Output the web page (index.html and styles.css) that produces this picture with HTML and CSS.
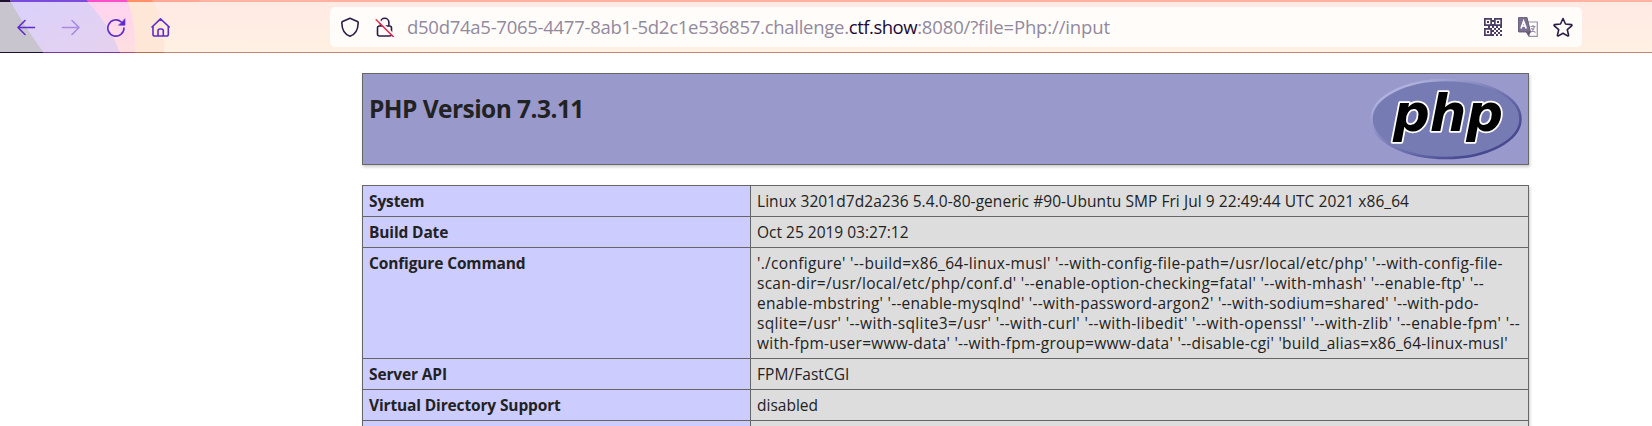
FILE: index.html
```html
<!DOCTYPE html>
<html lang="en">
<head>
<meta charset="utf-8">
<title>phpinfo()</title>
<link rel="stylesheet" href="styles.css">
</head>
<body>
<header class="toolbar">
  <svg class="theme" viewBox="0 0 200 53" width="200" height="53" aria-hidden="true">
    <defs>
      <linearGradient id="lilac" x1="0" y1="0" x2="1" y2="1"><stop offset="0" stop-color="#d9d1fb"/><stop offset="1" stop-color="#e6d1ee"/></linearGradient>
      <linearGradient id="pink" x1="0" y1="0" x2="0" y2="1"><stop offset="0" stop-color="#ffd2f0"/><stop offset="1" stop-color="#ffdfe0"/></linearGradient>
    </defs>
    <path d="M128 2H154Q166 28 164 52H120Z" fill="#ffe7d8"/>
    <path d="M88 2H128Q137 28 135 52H100Z" fill="url(#pink)"/>
    <path d="M10 2H88Q110 26 120 52H30Z" fill="url(#lilac)"/>
    <path d="M0 2H11Q18 16 43 52H0Z" fill="#c9c5cf"/>
    <path d="M0 0H10L11 2H0Z" fill="#1d1033"/>
    <path d="M10 0H87L89 2H11Z" fill="#7b4bdc"/>
    <path d="M87 0H127L128 2H89Z" fill="#f950c8"/>
    <path d="M127 0H152L154 2H128Z" fill="#ff9068"/>
    <path d="M152 0H200V2H154Z" fill="#ffa893"/>
    <path d="M0 52H43V53H0Z" fill="#1d1033"/>
    <path d="M43 52H120V53H43Z" fill="#75389e"/>
    <path d="M120 52H135V53H120Z" fill="#ad4d7c"/>
    <path d="M135 52H164V53H135Z" fill="#b8704f"/>
  </svg>
  <nav class="nav">
    <svg class="icon" viewBox="0 0 20 20"><path d="M18.500 10.500H2M9 3.500L2 10.500L9 17.500"/></svg>
    <svg class="icon faded" viewBox="0 0 20 20"><path d="M1.500 10.500H18M11 3.500L18 10.500L11 17.500"/></svg>
    <svg class="icon" viewBox="0 0 20 20"><path d="M18 11A8.100 8.100 0 1 1 15.300 5"/><path class="solid" d="M19 2V8.200H12.800Z"/></svg>
    <svg class="icon" viewBox="0 0 20 20"><path d="M1 10L9.500 1.800L18.200 10M2 9.500V17.200Q2 19 3.800 19H15.500Q17.300 19 17.300 17.200V9.500M7 19V13.700Q7 12 8.700 12H10.600Q12.300 12 12.300 13.700V19"/></svg>
  </nav>
  <div class="urlbar">
    <svg class="icon dark" viewBox="0 0 20 20"><path d="M10 1.200L17.400 4.500Q18.300 5 18.200 6C18 12 15.500 17.500 10 19.200C4.500 17.500 2 12 1.800 6Q1.700 5 2.600 4.500Z"/></svg>
    <svg class="icon dark lock" viewBox="0 0 20 20"><path d="M5.500 9V5.500A4.200 4.200 0 0 1 13.900 5.500V9M4.500 9H14.500Q16.500 9 16.500 11V17Q16.500 19 14.500 19H4.500Q2.500 19 2.500 17V11Q2.500 9 4.500 9Z"/><path class="gap" d="M2.500 1.800L19 18.300"/><path class="slash" d="M1.200 2.700L18.400 19.900"/></svg>
    <div class="url"><span class="sub">d50d74a5-7065-4477-8ab1-5d2c1e536857.challenge.</span><span class="host">ctf.show</span><span class="path">:8080/?file=Php://input</span></div>
    <div class="actions">
      <svg class="qr" viewBox="0 0 18 18"><path d="M0 0H8V8H0ZM10 0H18V8H10ZM0 10H8V18H0Z"/><path class="hole" d="M1.700 1.700H6.300V6.300H1.700ZM11.700 1.700H16.300V6.300H11.700ZM1.700 11.700H6.300V16.300H1.700Z"/><path d="M3 3H5V5H3ZM13 3H15V5H13ZM3 13H5V15H3ZM8 2H10V4H8ZM8 6H10V8H8ZM8 8H10V10H8ZM4 8H6V10H4ZM12 8H14V10H12ZM16 8H18V10H16ZM10 10H12V12H10ZM14 10H16V12H14ZM8 12H10V14H8ZM12 12H14V14H12ZM16 12H18V14H16ZM10 14H12V16H10ZM14 14H16V16H14ZM8 16H10V18H8ZM12 16H14V18H12ZM16 16H18V18H16Z"/></svg>
      <svg class="translate" viewBox="0 0 20 20"><path class="leaf" d="M9 5H19.300V19.400H11L8.500 15"/><path class="glyph" d="M12.500 9.500H17.500M15 8V9.500M16.500 9.500Q15.500 13.500 12.500 15.500M13.500 11Q14.500 14 17.500 15.500"/><path class="block" d="M1 .4H9L12.500 15H1Q.4 15 .4 14V1Q.4 .4 1 .4Z"/><path class="letter" d="M3 11.500L5.600 4.200L8.200 11.500M4 9H7.300"/><path class="fold" d="M8 15H12.500L11 19.500Z"/></svg>
      <svg class="icon dark" viewBox="0 0 20 20"><path d="M10 1.500L12.500 7L18.400 7.600Q19.300 8 18.700 8.800L14.300 12.700L15.600 18.200Q15.500 19.200 14.600 18.900L10 16.200L5.400 18.900Q4.500 19.200 4.400 18.200L5.700 12.700L1.300 8.800Q.7 8 1.600 7.600L7.500 7Z"/></svg>
    </div>
  </div>
</header>
<main class="page">
  <section class="banner">
    <h1>PHP Version 7.3.11</h1>
    <svg class="logo" viewBox="0 0 152 82" width="152" height="82" role="img" aria-label="PHP logo">
      <defs><linearGradient id="rim" x1="0" y1="0" x2="1" y2="1"><stop offset=".15" stop-color="#aeb2dc"/><stop offset=".5" stop-color="#7478b3"/><stop offset=".8" stop-color="#474a91"/></linearGradient></defs>
      <ellipse cx="76" cy="41" rx="74.500" ry="39" fill="#777bb3" stroke="url(#rim)" stroke-width="2.500"/>
      <text class="wordmark" x="23" y="52.500" textLength="110" lengthAdjust="spacingAndGlyphs">php</text>
    </svg>
  </section>
  <dl class="info">
    <dt>System</dt>
    <dd><span class="s1">Linux 3201d7d2a236 5.4.0-80-generic #90-Ubuntu SMP Fri Jul 9 22:49:44 UTC 2021 x86_64</span></dd>
    <dt>Build Date</dt>
    <dd>Oct 25 2019 03:27:12</dd>
    <dt>Configure Command</dt>
    <dd><span class="s4">'./configure' '--build=x86_64-linux-musl' '--with-config-file-path=/usr/local/etc/php' '--with-config-file-</span><br>
      <span class="s3">scan-dir=/usr/local/etc/php/conf.d' '--enable-option-checking=fatal' '--with-mhash' '--enable-ftp' '--</span><br>
      <span class="s2">enable-mbstring' '--enable-mysqlnd' '--with-password-argon2' '--with-sodium=shared' '--with-pdo-</span><br>
      <span class="s5">sqlite=/usr' '--with-sqlite3=/usr' '--with-curl' '--with-libedit' '--with-openssl' '--with-zlib' '--enable-fpm' '--</span><br>
      <span class="s2">with-fpm-user=www-data' '--with-fpm-group=www-data' '--disable-cgi' 'build_alias=x86_64-linux-musl'</span></dd>
    <dt>Server API</dt>
    <dd><span class="s1">FPM/FastCGI</span></dd>
    <dt>Virtual Directory Support</dt>
    <dd>disabled</dd>
    <dt class="cut"></dt>
    <dd class="cut"></dd>
  </dl>
</main>
</body>
</html>
```
FILE: styles.css
```css
body {
  margin: 0;
  background: #fff;
  color: #222;
  font-family: "Open Sans", "Noto Sans", sans-serif;
  font-size: 15.5px;
}

/* Browser toolbar */
.toolbar {
  position: relative;
  display: flex;
  box-sizing: border-box;
  height: 53px;
  border-top: 2px solid #ffb2a0;
  border-bottom: 1px solid #b98878;
  background: linear-gradient(#ffe9e4, #fff1e3);
}
.theme { position: absolute; left: 0; top: -2px; }
.nav {
  position: relative;
  display: flex;
  gap: 25px;
  width: 314px;
  box-sizing: border-box;
  padding: 15px 0 0 16px;
}
.icon {
  flex: none;
  width: 20px;
  height: 20px;
  fill: none;
  stroke: #5b2ccf;
  stroke-width: 1.6;
  stroke-linecap: round;
  stroke-linejoin: round;
}
.solid { fill: #5b2ccf; stroke-width: .6; }
.faded { opacity: .42; }
.dark { stroke: #2b1d48; }
.urlbar {
  display: flex;
  align-items: center;
  box-sizing: border-box;
  width: 1252px;
  height: 40px;
  margin: 5px 0 0 16px;
  padding: 0 9px 0 10px;
  border-radius: 5px;
  background: #fffcf9;
}
.lock { margin-left: 15px; }
.gap { stroke: #fffcf9; stroke-width: 2; }
.slash { stroke: #f0284f; stroke-width: 1.5; }
.url {
  margin-left: 12px;
  color: #91899e;
  font-size: 18.5px;
  line-height: 26px;
  white-space: nowrap;
}
.sub { letter-spacing: -.27px; }
.host { color: #1b0a38; letter-spacing: -.48px; }
.path { letter-spacing: -.14px; }
.actions { display: flex; align-items: center; gap: 15px; margin-left: auto; }
.qr { width: 18px; height: 18px; margin-right: 1px; fill: #4a3d66; }
.qr .hole { fill: #fffcf9; }
.translate { width: 20px; height: 20px; fill: none; }
.leaf { fill: #fffcf9; stroke: #9a92a8; stroke-width: 1.2; }
.glyph { stroke: #9a92a8; stroke-width: 1.2; }
.block { fill: #7c7190; stroke: #554869; stroke-width: .8; }
.letter { stroke: #fff; stroke-width: 1.7; }
.fold { fill: #655979; }

/* phpinfo page */
.page { width: 1167px; height: 353px; margin: 20px 0 0 362px; }
.banner {
  display: flex;
  justify-content: space-between;
  box-sizing: border-box;
  height: 92px;
  padding: 4px 6px 0 6px;
  border: 1px solid #666;
  background: #99c;
  box-shadow: 1px 2px 3px #ccc;
}
h1 {
  margin: 14px 0 0;
  font-size: 24.5px;
  line-height: 34px;
  letter-spacing: -.55px;
}
.wordmark {
  font: italic bold 52px "DejaVu Sans", sans-serif;
  fill: #000;
  stroke: #fff;
  stroke-width: 3.5px;
  stroke-linejoin: round;
  paint-order: stroke;
}
.info {
  display: grid;
  grid-template-columns: 387px 1fr;
  grid-template-rows: 30px 30px 110px 30px 30px 5px;
  gap: 1px;
  margin: 20px 0 0;
  padding: 1px 1px 0;
  background: #666;
  box-shadow: 1px 2px 3px #ccc;
  line-height: 20px;
}
dt, dd { margin: 0; padding: 5px 6px; white-space: nowrap; }
dt { background: #ccf; font-weight: bold; letter-spacing: -.14px; }
dd { background: #ddd; }
.info .cut { padding: 0; }
.s1 { letter-spacing: .06px; }
.s2 { letter-spacing: .25px; }
.s3 { letter-spacing: .275px; }
.s4 { letter-spacing: .3px; }
.s5 { letter-spacing: .35px; }
```
